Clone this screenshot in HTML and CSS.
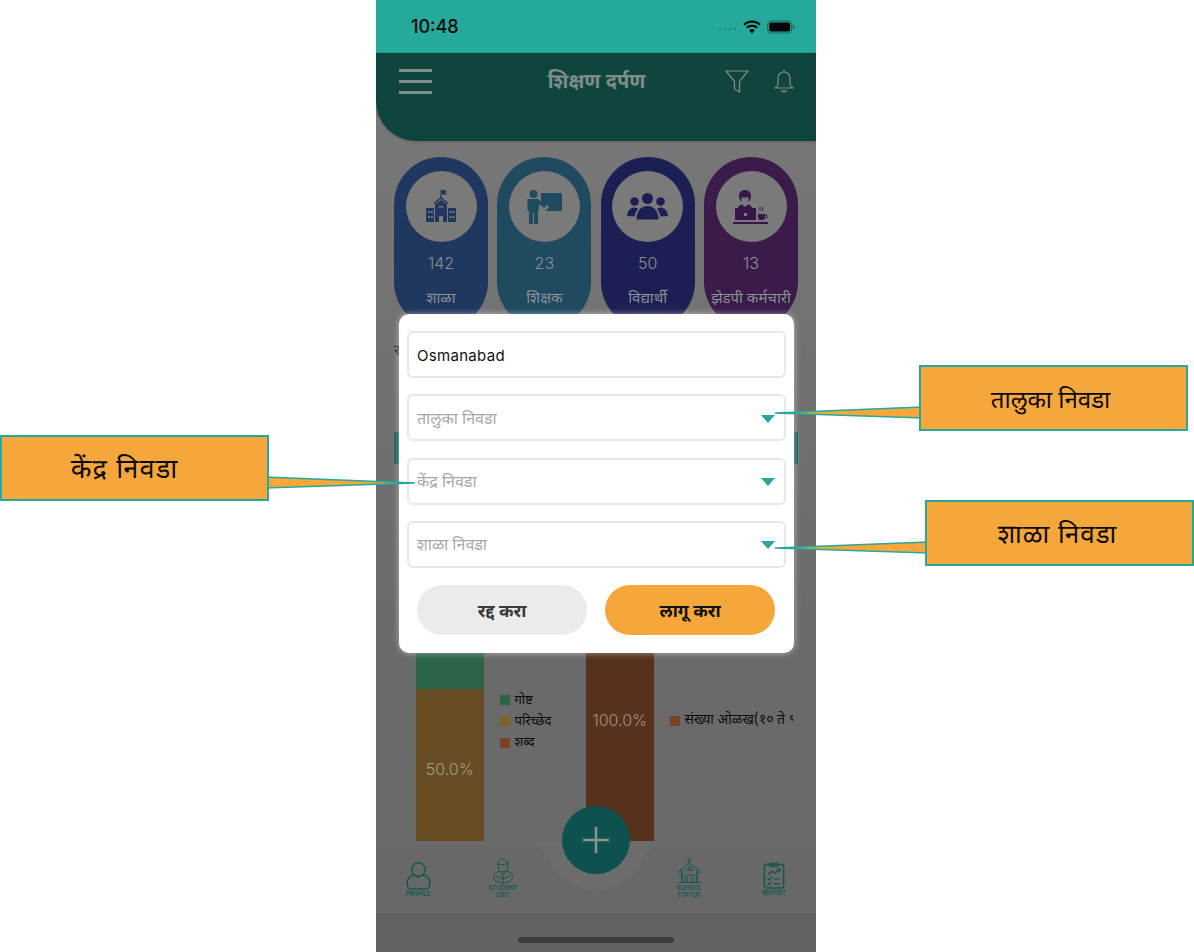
FILE: index.html
```html
<!DOCTYPE html>
<html lang="mr">
<head>
  <meta charset="UTF-8" />
  <title>शिक्षण दर्पण</title>
  <link rel="stylesheet" href="styles.css">
</head>
<body>
  <div class="canvas">
    <div class="phone">
      <div class="status-bar">
        <span class="clock">10:48</span>
        <div class="status-icons">
          <svg width="19" height="8" viewBox="0 0 19 8"><g fill="#1c8177"><circle cx="2" cy="6" r="1.100"/><circle cx="7" cy="6" r="1.100"/><circle cx="12" cy="6" r="1.100"/><circle cx="17" cy="6" r="1.100"/></g></svg>
          <svg width="18" height="14" viewBox="0 0 18 14"><path d="M9 13.500 6.200 10.400a4 4 0 0 1 5.600 0Z" fill="#050505"/><path d="M3.800 7.800a7.400 7.400 0 0 1 10.400 0M1 4.800a11.400 11.400 0 0 1 16 0" fill="none" stroke="#050505" stroke-width="2"/></svg>
          <svg width="28" height="14" viewBox="0 0 28 14"><rect x=".7" y="1" width="24" height="12" rx="3.400" fill="none" stroke="#14665e" stroke-width="1"/><rect x="2.200" y="2.500" width="21" height="9" rx="2" fill="#050505"/><path d="M26 5v4c1-.3 1.500-1 1.500-2S27 5.300 26 5Z" fill="#14665e"/></svg>
        </div>
      </div>

      <header class="app-header">
        <div class="menu-btn"><span></span><span></span><span></span></div>
        <h1>शिक्षण दर्पण</h1>
        <div class="header-icons">
          <svg width="24" height="24" viewBox="0 0 24 24" fill="none" stroke="#7f8d8a" stroke-width="1.200"><path d="M1 2h22L14.500 12.500V23l-5-3v-7.500Z"/></svg>
          <svg width="20" height="24" viewBox="0 0 20 24" fill="none" stroke="#7f8d8a" stroke-width="1.200"><path d="M10 3a6 6 0 0 0-6 6v6c0 2-1.500 3-3 4h18c-1.500-1-3-2-3-4V9a6 6 0 0 0-6-6Z"/><path d="M10 3V1M7.500 21a2.600 2.600 0 0 0 5 0"/></svg>
        </div>
      </header>

      <main class="content">
        <div class="stat-cards">
          <div class="stat-card card-school">
            <div class="stat-icon">
              <svg width="32" height="34" viewBox="0 0 32 34"><path d="M15.500 0h1.200v8h-1.200z"/><path d="M16.500 0 22 .5 20.300 2.500 22 4.700l-5.500-.4z"/><path d="m16 7 7.500 6-1 1L16 9l-6.500 5-1-1Z"/><path d="M10 14.500 16 10l6 4.500V32h-4v-6h-4v6h-4Z"/><path d="M1 18h8v14H1zM23 18h8v14h-8z"/><path class="cut" d="M13.500 16h5v1.500h-5zM3 21h1.800v2H3zM6 21h1.800v2H6zM3 26h1.800v2H3zM6 26h1.800v2H6zM24.500 21h1.800v2h-1.800zM27.500 21h1.800v2h-1.800zM24.500 26h1.800v2h-1.800zM27.500 26h1.800v2h-1.800z"/></svg>
            </div>
            <div class="stat-num">142</div>
            <div class="stat-label">शाळा</div>
          </div>
          <div class="stat-card card-teacher">
            <div class="stat-icon">
              <svg width="38" height="36" viewBox="0 0 38 36"><circle cx="8.500" cy="5" r="4"/><path d="M3 10h10l5 4.500 4-4 .8.800-4.800 6.500-4-2.500V21h-1v14H9v-11H8v11H4V22H2.500v-9A3 3 0 0 1 3 10Z"/><path d="M16 4h21v18H21l3-4-2-2-3 3-3-3Z"/></svg>
            </div>
            <div class="stat-num">23</div>
            <div class="stat-label">शिक्षक</div>
          </div>
          <div class="stat-card card-student">
            <div class="stat-icon">
              <svg width="41" height="27" viewBox="0 0 41 27"><circle cx="20.500" cy="5.500" r="5.500"/><circle cx="7.500" cy="8.500" r="4.300"/><circle cx="33.500" cy="8.500" r="4.300"/><path d="M9.500 26.500C9.500 18 14 13 20.500 13s11 5 11 13.500Z"/><path d="M0 23c.5-5 3.500-8.500 7-8.500 1.500 0 2.800.5 4 1.500-2 2.300-3 5-3.500 7.500ZM41 23c-.5-5-3.500-8.500-7-8.500-1.500 0-2.800.5-4 1.500 2 2.300 3 5 3.500 7.500Z"/></svg>
            </div>
            <div class="stat-num">50</div>
            <div class="stat-label">विद्यार्थी</div>
          </div>
          <div class="stat-card card-staff">
            <div class="stat-icon">
              <svg width="36" height="36" viewBox="0 0 36 36"><path d="M12 1c3.500 0 6 2.500 6 5.500S17 11 16 12.500h-8C7 11 6 9.500 6 6.500S8.500 1 12 1Z"/><path class="cut" d="M8.500 8c2 1 5 1 7-.5v4c0 2-1.500 3.500-3.500 3.500s-3.500-1.500-3.500-3.500Z"/><path d="M5 19c0-2 2-3 4-3.500l3 2.500 3-2.500c2 .5 4 1.500 4 3.500Z"/><path d="M2 19h21v12H2Z"/><path d="M0 33h35v2H0Z"/><path class="cut" d="M11 24h3v3h-3z"/><path d="M25 25h7v3a3 3 0 0 1-3 3h-1a3 3 0 0 1-3-3Z"/><path d="M27 18v4M29.500 18v4" fill="none" stroke="#37174a"/><path d="M31.500 26h1.500a1.500 1.500 0 0 1 0 3h-2" fill="none" stroke="#37174a"/></svg>
            </div>
            <div class="stat-num">13</div>
            <div class="stat-label">झेडपी कर्मचारी</div>
          </div>
        </div>

        <div class="section-title">रचना</div>
        <div class="table-box"><div class="table-band"></div></div>

        <div class="charts">
          <div class="chart">
            <div class="bar">
              <div class="seg seg-green"></div>
              <div class="seg seg-orange">50.0%</div>
            </div>
            <ul class="legend">
              <li><i class="dot-green"></i>गोष्ट</li>
              <li><i class="dot-orange"></i>परिच्छेद</li>
              <li><i class="dot-brown"></i>शब्द</li>
            </ul>
          </div>
          <div class="chart">
            <div class="bar bar-short">
              <div class="seg seg-brown">100.0%</div>
            </div>
            <ul class="legend legend-wide">
              <li><i class="dot-brown"></i>संख्या ओळख(१० ते ९९)</li>
            </ul>
          </div>
        </div>
      </main>

      <nav class="tab-bar">
        <svg class="tab-notch" width="440" height="47" viewBox="0 0 440 47"><path d="M150 0C165 0 168 8 173 14A51 51 0 0 0 267 14C272 8 275 0 290 0Z" fill="#6c6c6c"/></svg>
        <a class="tab tab-profile">
          <svg width="25" height="29" viewBox="0 0 26 31" fill="none" stroke="#14584f" stroke-width="1.500"><circle cx="13" cy="9" r="7.200"/><path d="M8 15c-4 1-7 4-7 8v3c0 2 1.500 4 4 4h16c2.500 0 4-2 4-4v-3c0-4-3-7-7-8-3 2.500-7 2.500-10 0Z"/></svg>
          <span>PROFILE</span>
        </a>
        <a class="tab">
          <svg width="20" height="26" viewBox="0 0 20 26" fill="none" stroke="#14584f" stroke-width="1"><path d="M5 6a5 5 0 0 1 10 0v3a5 5 0 0 1-10 0Z"/><path d="M5 6c3 1 7 1 10-1"/><path d="M6 13 2.500 15C1 16 .5 18 .5 20l2 3L10 25.500 17.500 23l2-3c0-2-.5-4-2-5L14 13l-4 4Z"/><path d="M10 17v8.500M3 18l7 3 7-3"/></svg>
          <span>STUDENT<br>LIST</span>
        </a>
        <div class="tab-gap"></div>
        <a class="tab">
          <svg width="25" height="26" viewBox="0 0 25 26" fill="none" stroke="#14584f" stroke-width="1"><circle cx="12.500" cy="2" r="1.500"/><path d="M12.500 3.500V6M3 12l9.500-6.500L22 12M5 11v13M20 11v13M1 24.500h23M1 14h4v10M24 14h-4v10M8 24v-7h9v7M10.500 24v-5M14.500 24v-5M8 12h9M2.500 17h1M21.500 17h1M2.500 20h1M21.500 20h1"/><circle cx="12.500" cy="10" r="1.500"/></svg>
          <span>SCHOOL<br>STATUS</span>
        </a>
        <a class="tab tab-report">
          <svg width="22" height="27" viewBox="0 0 22 28" fill="none" stroke="#14584f" stroke-width="1.500"><rect x="1" y="2.500" width="20" height="24.500" rx="2"/><path d="M7 4.500V1.500h8v3Z"/><path d="M5 13l4-3.500 3 2 4.500-4M14 7.500h3v3M4.500 17l1.500 1.500 2.500-3M4.500 22l1.500 1.500 2.500-3M11 17.500h6M11 22.500h6"/></svg>
          <span>REPORT</span>
        </a>
      </nav>
      <div class="home-area"><div class="home-bar"></div></div>

      <button class="fab" type="button"><svg width="30" height="30" viewBox="0 0 30 30"><path d="M15 2v26M2 15h26" stroke="#8b9491" stroke-width="2.500"/></svg></button>

      <div class="modal">
        <div class="field field-value">Osmanabad</div>
        <div class="field">तालुका निवडा<i class="caret"></i></div>
        <div class="field">केंद्र निवडा<i class="caret"></i></div>
        <div class="field">शाळा निवडा<i class="caret"></i></div>
        <div class="modal-actions">
          <button class="btn btn-cancel" type="button">रद्द करा</button>
          <button class="btn btn-apply" type="button">लागू करा</button>
        </div>
      </div>
    </div>

    <!-- callout tails run from the boxes into the phone -->
    <svg class="tails" width="1194" height="952" viewBox="0 0 1194 952">
      <g fill="#f5a73b" stroke="#25a99b" stroke-width="1.500">
        <path d="M922 407 775 413 922 418Z"/>
        <path d="M928 542 775 548 928 553Z"/>
        <path d="M265 477 415 483 265 488Z"/>
      </g>
    </svg>
    <div class="callout callout-taluka">तालुका निवडा</div>
    <div class="callout callout-shala">शाळा निवडा</div>
    <div class="callout callout-kendra">केंद्र निवडा</div>
  </div>
</body>
</html>
```

FILE: styles.css
```css
html, body {
  margin: 0;
  padding: 0;
  background: #fff;
  font-family: "Noto Sans Devanagari", "Noto Sans", sans-serif;
}
*, *::before, *::after {
  box-sizing: border-box;
}

.canvas {
  position: relative;
  width: 1194px;
  height: 952px;
  overflow: hidden;
}

/* phone, dim colours are the ones seen under the modal backdrop */
.phone {
  position: relative;
  display: flex;
  flex-direction: column;
  width: 440px;
  height: 952px;
  margin-left: 376px;
  overflow: hidden;
  background: linear-gradient(#7a7a7a, #6a6a6a 70%);
}

.status-bar {
  display: flex;
  align-items: center;
  justify-content: space-between;
  height: 53px;
  padding: 0 21px 0 35px;
  background: #25a99b;
}
.clock {
  font-family: Inter, sans-serif;
  font-size: 18px;
  font-weight: 500;
  color: #070707;
}
.status-icons {
  display: flex;
  align-items: center;
  gap: 6px;
}

.app-header {
  display: flex;
  align-items: flex-start;
  justify-content: space-between;
  height: 88px;
  padding: 16px 22px 0 23px;
  background: #10453e;
  border-bottom-left-radius: 40px;
  box-shadow: 0 1px 3px rgba(0, 0, 0, 0.2);
}
.app-header h1 {
  margin: 2px 0 0;
  font-size: 20px;
  font-weight: 700;
  line-height: 24px;
  color: #7f8d8a;
}
.menu-btn {
  display: flex;
  flex: 1;
  flex-direction: column;
  gap: 8px;
}
.menu-btn span {
  width: 33px;
  height: 3px;
  background: #7f8d8a;
}
.header-icons {
  display: flex;
  flex: 1;
  justify-content: flex-end;
  gap: 25px;
}

.content {
  flex: 1;
  padding: 16px 18px 0;
  overflow: hidden;
}

.stat-cards {
  display: flex;
  gap: 9.300px;
}
.stat-card {
  flex: 1;
  height: 172px;
  padding-top: 14px;
  border-radius: 47px;
  text-align: center;
}
.stat-icon {
  display: flex;
  align-items: center;
  justify-content: center;
  width: 71px;
  height: 71px;
  margin: 0 auto;
  border-radius: 50%;
  background: #7a7a7a;
}
.stat-icon .cut {
  fill: #7a7a7a;
}
.card-school { background: #20375f; }
.card-school svg { fill: #20375f; }
.card-teacher { background: #1f4a60; }
.card-teacher svg { fill: #1f4a60; }
.card-student { background: #1c1f54; }
.card-student svg { fill: #1c1f54; }
.card-staff { background: #3a1b4a; }
.card-staff svg { fill: #37174a; }
.stat-num {
  margin-top: 11px;
  font-family: Inter, sans-serif;
  font-size: 16px;
  font-weight: 300;
  line-height: 20px;
  color: #8a8f98;
}
.stat-label {
  margin-top: 15px;
  font-size: 15px;
  line-height: 24px;
  white-space: nowrap;
  color: #8a8f98;
}

.section-title {
  margin-top: 10px;
  font-size: 15px;
  line-height: 26px;
  color: #222;
}
.table-box {
  height: 64px;
  margin-top: 67px;
  border: 1px solid #747474;
  border-radius: 4px;
}
.table-band {
  height: 32px;
  margin: -1px;
  background: #1a625b;
}

.charts {
  display: flex;
  margin: 41px 5px 0 0;
  overflow: hidden;
}
.chart {
  display: flex;
  flex: 0 0 170px;
  height: 304px;
  padding-left: 22px;
}
.bar {
  display: flex;
  flex: 0 0 67.500px;
  flex-direction: column;
}
.bar-short {
  height: 242px;
  margin-top: 62px;
}
.seg {
  flex: 0 0 152px;
  display: flex;
  align-items: center;
  justify-content: center;
  font-family: Inter, sans-serif;
  font-size: 16px;
  font-weight: 300;
  white-space: nowrap;
}
.seg-green { background: #2b6546; }
.seg-orange { padding-top: 8px; background: #664d24; color: #a79b80; }
.seg-brown { flex-basis: 242px; background: #57321d; color: #a78f80; }

.legend {
  margin: 152.500px 0 0 16px;
  padding: 0;
  list-style: none;
  font-size: 13px;
  line-height: 21.300px;
  color: #0c0c0c;
}
.legend li {
  display: flex;
  align-items: center;
  gap: 5px;
  white-space: nowrap;
}
.legend i {
  flex: none;
  width: 10px;
  height: 10px;
}
.legend-wide {
  margin-top: 173px;
  font-size: 14px;
}
.dot-green { background: #2b6546; }
.dot-orange { background: #806128; }
.dot-brown { background: #7a4226; }

.tab-bar {
  position: relative;
  display: flex;
  flex: 0 0 68px;
  gap: 49px;
  padding: 13px 0 0 24px;
  background: #686868;
  box-shadow: 0 -2px 3px rgba(255, 255, 255, 0.03);
}
.tab-notch {
  position: absolute;
  left: 0;
  top: 0;
}
.tab {
  position: relative;
  display: flex;
  flex: 0 0 36px;
  flex-direction: column;
  align-items: center;
  font-family: Inter, sans-serif;
  font-size: 6px;
  font-weight: 600;
  line-height: 6.500px;
  text-align: center;
  color: #14584f;
}
.tab span {
  margin-top: 1px;
}
.tab-profile {
  padding-top: 3px;
}
.tab-report {
  padding-top: 4px;
}
.tab-gap {
  flex: 0 0 52px;
}

.home-area {
  flex: 0 0 39px;
  padding-top: 24px;
  background: #636363;
}
.home-bar {
  width: 156px;
  height: 6px;
  margin: 0 auto;
  border-radius: 3px;
  background: #3d3d3d;
}

.fab {
  position: absolute;
  left: 186px;
  top: 806px;
  display: flex;
  align-items: center;
  justify-content: center;
  width: 68px;
  height: 68px;
  padding: 0;
  border: none;
  border-radius: 50%;
  background: #0d524e;
}

.modal {
  position: absolute;
  left: 23px;
  top: 314px;
  display: flex;
  flex-direction: column;
  gap: 16.300px;
  width: 395px;
  height: 339px;
  padding: 17px 8px 0;
  border-radius: 10px;
  background: #fff;
  box-shadow: 0 0 6px rgba(255, 255, 255, 0.5);
}
.field {
  display: flex;
  align-items: center;
  justify-content: space-between;
  height: 47px;
  padding: 5px 8px 0;
  border: 2px solid #e8e8e8;
  border-radius: 6px;
  font-size: 16px;
  color: #a8a8a8;
}
.field-value {
  padding-top: 2px;
  font-family: Inter, sans-serif;
  font-size: 15px;
  letter-spacing: 0.3px;
  color: #111;
}
.caret {
  width: 0;
  height: 0;
  margin: -3px 1px 0 0;
  border-left: 7px solid transparent;
  border-right: 7px solid transparent;
  border-top: 8px solid #25a99b;
}
.modal-actions {
  display: flex;
  justify-content: space-between;
  padding: 1px 11px 0 10px;
}
.btn {
  width: 170px;
  height: 50px;
  padding-top: 6px;
  border: none;
  border-radius: 25px;
  font-family: inherit;
  font-size: 17.500px;
  font-weight: 700;
  color: #222;
}
.btn-cancel { background: #ebebeb; color: #3a3a3a; }
.btn-apply { background: #f5a73b; color: #111; }

/* annotations on top of the screenshot */
.tails {
  position: absolute;
  left: 0;
  top: 0;
}
.callout {
  position: absolute;
  display: flex;
  align-items: center;
  justify-content: center;
  width: 269px;
  height: 66px;
  padding-top: 8px;
  border: 2px solid #25a99b;
  background: #f5a73b;
  font-size: 24px;
  color: #0a0a0a;
}
.callout-taluka { left: 919px; top: 365px; padding-right: 6px; }
.callout-shala { left: 925px; top: 500px; padding-right: 4px; font-size: 26px; letter-spacing: 1px; }
.callout-kendra { left: 0; top: 435px; padding-top: 6px; padding-right: 20px; font-size: 27px; letter-spacing: 1.200px; }
```
